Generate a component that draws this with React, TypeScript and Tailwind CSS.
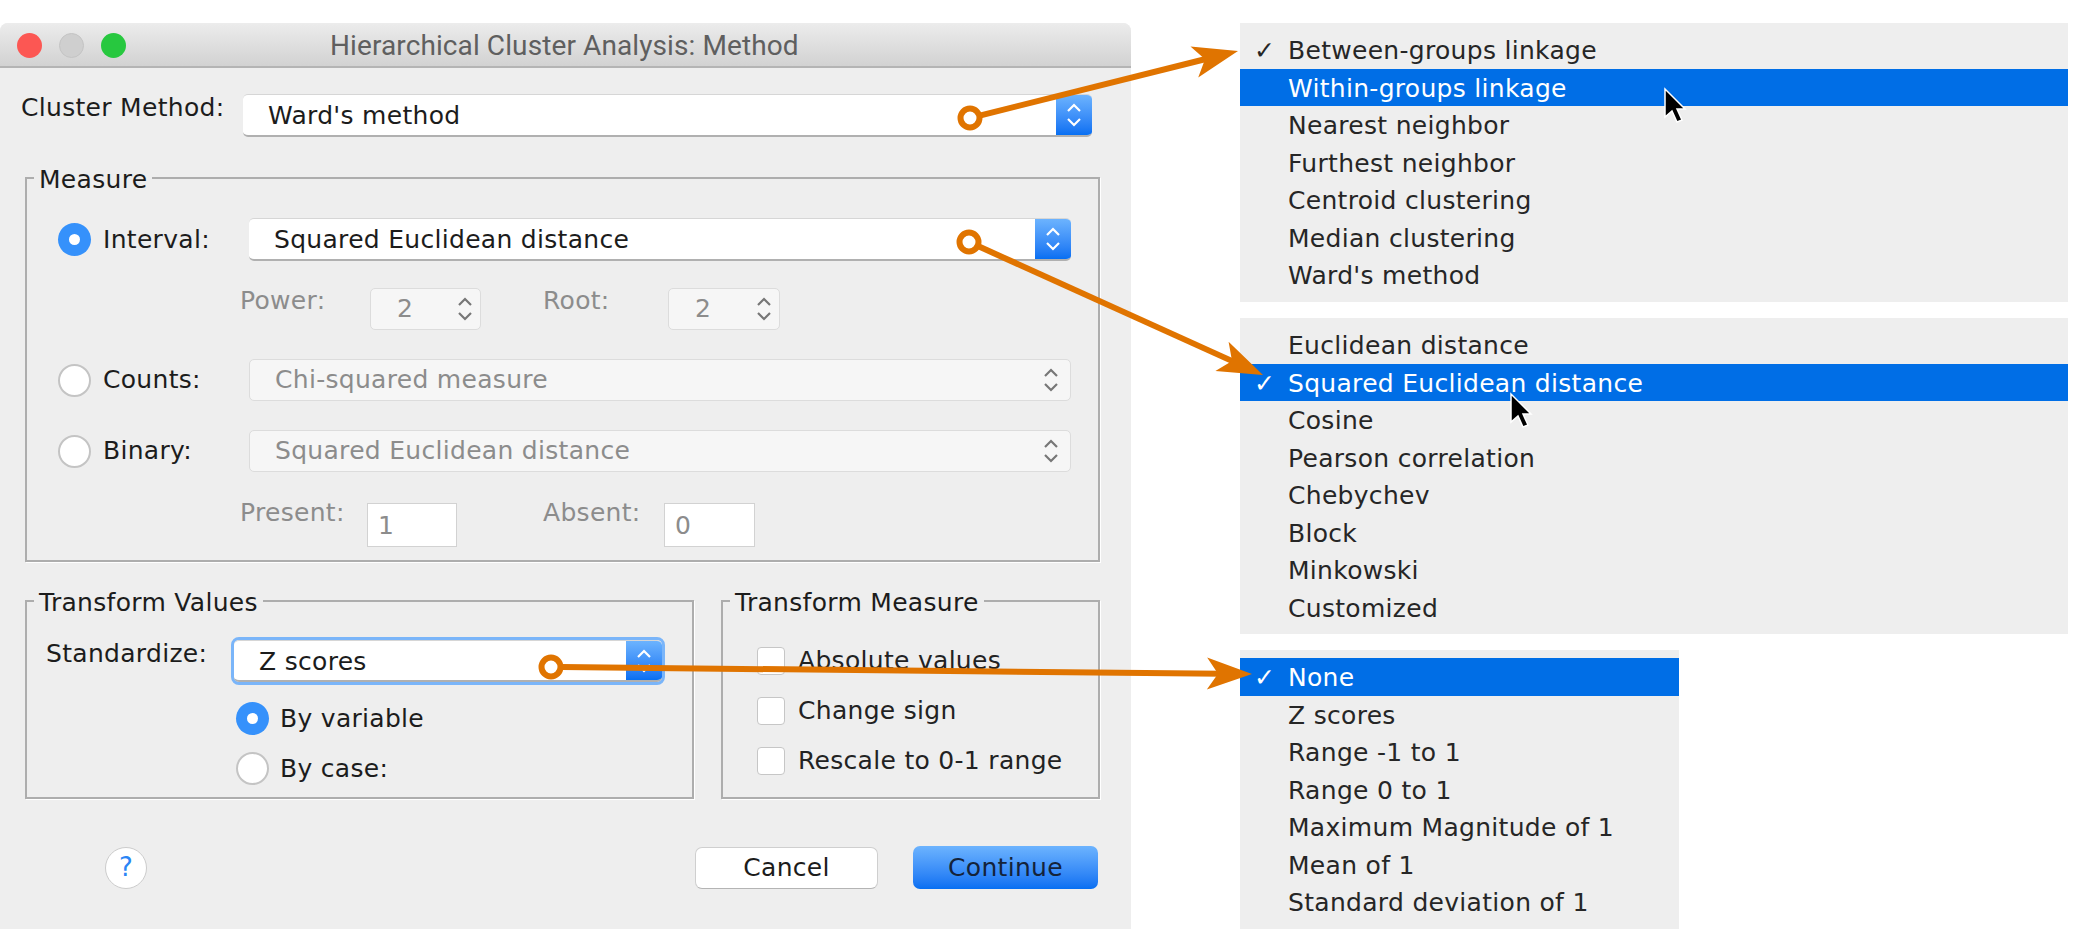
const menus = [
  {
    width: "w-[828px]",
    height: "h-[279px]",
    checked: "Between-groups linkage",
    active: "Within-groups linkage",
    items: ["Between-groups linkage", "Within-groups linkage", "Nearest neighbor", "Furthest neighbor", "Centroid clustering", "Median clustering", "Ward's method"],
  },
  {
    width: "w-[828px]",
    height: "h-[316px]",
    checked: "Squared Euclidean distance",
    active: "Squared Euclidean distance",
    items: ["Euclidean distance", "Squared Euclidean distance", "Cosine", "Pearson correlation", "Chebychev", "Block", "Minkowski", "Customized"],
  },
  {
    width: "w-[439px]",
    height: "h-[279px]",
    checked: "None",
    active: "None",
    items: ["None", "Z scores", "Range -1 to 1", "Range 0 to 1", "Maximum Magnitude of 1", "Mean of 1", "Standard deviation of 1"],
  },
];

function Chevrons({ color, width = 16 }: { color: string; width?: number }) {
  return (
    <svg width={width} height="26" viewBox="0 0 16 26" fill="none" stroke={color} strokeWidth="2.2">
      <polyline points="2,9 8,3 14,9" />
      <polyline points="2,17 8,23 14,17" />
    </svg>
  );
}

function Select({ label, className }: { label: string; className: string }) {
  return (
    <div className={`flex overflow-hidden rounded-[5px] border-t border-t-[#d6d6d6] border-b-2 border-b-[#b0b0b0] bg-white ${className}`}>
      <div className="flex-1 pl-[25px] leading-[41px] text-[#1c1c1c]">{label}</div>
      <div className="flex w-[36px] items-center justify-center bg-gradient-to-b from-[#6cb3fe] to-[#056ff2]">
        <Chevrons color="#ffffff" />
      </div>
    </div>
  );
}

function DisabledSelect({ label }: { label: string }) {
  return (
    <div className="flex h-[42px] w-[822px] items-center justify-between rounded-[5px] border border-[#dcdcdc] bg-[#f6f6f6] pl-[25px] pr-[11px] text-[#8c8c8c]">
      <span>{label}</span>
      <Chevrons color="#777777" />
    </div>
  );
}

function Spinner({ value, className }: { value: string; className: string }) {
  return (
    <div className={`flex h-[42px] items-center justify-between rounded-[5px] border border-[#dcdcdc] bg-[#f6f6f6] pl-[26px] pr-[7px] text-[#8c8c8c] ${className}`}>
      <span>{value}</span>
      <Chevrons color="#777777" />
    </div>
  );
}

function Radio({ on }: { on?: boolean }) {
  if (on) {
    return (
      <span className="flex h-[33px] w-[33px] shrink-0 items-center justify-center rounded-full bg-[#3591fb]">
        <span className="h-[11px] w-[11px] rounded-full bg-white" />
      </span>
    );
  }
  return <span className="h-[33px] w-[33px] shrink-0 rounded-full border-2 border-[#c4c4c4] bg-white" />;
}

function Check({ label }: { label: string }) {
  return (
    <div className="flex h-[28px] items-center gap-[13px] text-[#222222]">
      <span className="h-[28px] w-[28px] rounded-[4px] border border-[#c6c6c6] bg-white" />
      <span>{label}</span>
    </div>
  );
}

function Group({
  title,
  className,
  legendClass,
  children,
}: {
  title: string;
  className: string;
  legendClass: string;
  children: React.ReactNode;
}) {
  return (
    <fieldset className={`border-2 border-[#adadad] shadow-[1px_1px_0_#ffffff] ${className}`}>
      <legend className={`px-[5px] leading-[30px] text-[#1c1c1c] ${legendClass}`}>
        <span className="relative top-[2px]">{title}</span>
      </legend>
      {children}
    </fieldset>
  );
}

// orange callout: ring on the control, line, notched head on the menu
function Callout({ x1, y1, x2, y2 }: { x1: number; y1: number; x2: number; y2: number }) {
  const len = Math.hypot(x2 - x1, y2 - y1);
  const dx = (x2 - x1) / len;
  const dy = (y2 - y1) / len;
  const px = -dy;
  const py = dx;
  const head = [
    [x2, y2],
    [x2 - 45 * dx + 16 * px, y2 - 45 * dy + 16 * py],
    [x2 - 34 * dx, y2 - 34 * dy],
    [x2 - 45 * dx - 16 * px, y2 - 45 * dy - 16 * py],
  ]
    .map((p) => p.join(","))
    .join(" ");
  return (
    <g>
      <circle cx={x1} cy={y1} r="9.5" fill="#ffffff" stroke="#e07400" strokeWidth="6" />
      <line x1={x1 + 11 * dx} y1={y1 + 11 * dy} x2={x2 - 30 * dx} y2={y2 - 30 * dy} stroke="#e07400" strokeWidth="6" />
      <polygon points={head} fill="#e07400" />
    </g>
  );
}

function Cursor({ x, y }: { x: number; y: number }) {
  return (
    <polygon
      transform={`translate(${x} ${y})`}
      points="0,0 0,28 7,22 12,33 17,31 12,20 20,20"
      fill="#000000"
      stroke="#ffffff"
      strokeWidth="1.5"
    />
  );
}

export default function App() {
  return (
    <div className="relative flex h-[929px] w-[2095px] items-start overflow-hidden bg-white font-['DejaVu_Sans',sans-serif] text-[25px] tracking-[0.3px]">
      {/* Dialog */}
      <div className="mt-[23px] flex h-[906px] w-[1131px] shrink-0 flex-col rounded-t-[8px] bg-[#eeeeee]">
        <div className="flex h-[45px] shrink-0 items-center rounded-t-[8px] border-b-2 border-b-[#b4b4b4] bg-gradient-to-b from-[#ececec] to-[#d2d2d2] pt-[2px]">
          <div className="flex w-[330px] shrink-0 gap-[17px] pl-[17px]">
            <span className="h-[25px] w-[25px] rounded-full bg-[#fc5753]" />
            <span className="h-[25px] w-[25px] rounded-full border border-[#c4c4c4] bg-[#cfcfcf]" />
            <span className="h-[25px] w-[25px] rounded-full bg-[#27c83f]" />
          </div>
          <div className="font-['Roboto',sans-serif] text-[28px] tracking-[0.1px] text-[#5f5f5f]">Hierarchical Cluster Analysis: Method</div>
        </div>

        <div className="mt-[26px] flex">
          <div className="w-[243px] pl-[21px] leading-[28px] text-[#1c1c1c]">Cluster Method:</div>
          <Select label="Ward's method" className="h-[43px] w-[849px]" />
        </div>

        <Group title="Measure" className="ml-[25px] mt-[26px] w-[1075px] pb-[13px] pl-[31px]" legendClass="-ml-[24px]">
          <div className="mt-[25px] flex items-center">
            <Radio on />
            <div className="ml-[12px] w-[146px] text-[#1c1c1c]">Interval:</div>
            <Select label="Squared Euclidean distance" className="h-[43px] w-[822px]" />
          </div>

          <div className="mt-[27px] flex pl-[182px] text-[#8c8c8c]">
            <div className="w-[130px] leading-[26px]">Power:</div>
            <Spinner value="2" className="w-[111px]" />
            <div className="ml-[62px] w-[125px] leading-[26px]">Root:</div>
            <Spinner value="2" className="w-[112px]" />
          </div>

          <div className="mt-[29px] flex items-center">
            <Radio />
            <div className="ml-[12px] w-[146px] text-[#1c1c1c]">Counts:</div>
            <DisabledSelect label="Chi-squared measure" />
          </div>

          <div className="mt-[29px] flex items-center">
            <Radio />
            <div className="ml-[12px] w-[146px] text-[#1c1c1c]">Binary:</div>
            <DisabledSelect label="Squared Euclidean distance" />
          </div>

          <div className="mt-[31px] flex pl-[182px] text-[#8c8c8c]">
            <div className="-mt-[3px] w-[127px] leading-[26px]">Present:</div>
            <div className="h-[44px] w-[90px] border border-[#d2d2d2] bg-white pl-[10px] leading-[44px]">1</div>
            <div className="-mt-[3px] ml-[86px] w-[121px] leading-[26px]">Absent:</div>
            <div className="h-[44px] w-[91px] border border-[#d2d2d2] bg-white pl-[10px] leading-[44px]">0</div>
          </div>
        </Group>

        <div className="mt-[24px] flex">
          <Group title="Transform Values" className="ml-[25px] w-[669px] pb-[12px] pl-[19px]" legendClass="-ml-[12px]">
            <div className="mt-[21px] flex">
              <div className="mt-[4px] w-[185px] leading-[26px] text-[#1c1c1c]">Standardize:</div>
              <div className="rounded-[8px] border-[3px] border-[#7ab5f9]">
                <Select label="Z scores" className="h-[42px] w-[428px]" />
              </div>
            </div>
            <div className="mt-[17px] flex items-center gap-[11px] pl-[190px] leading-[33px] text-[#1c1c1c]">
              <Radio on />
              <span>By variable</span>
            </div>
            <div className="mt-[17px] flex items-center gap-[11px] pl-[190px] leading-[33px] text-[#1c1c1c]">
              <Radio />
              <span>By case:</span>
            </div>
          </Group>

          <Group title="Transform Measure" className="ml-[27px] w-[379px] pl-[34px]" legendClass="-ml-[27px]">
            <div className="mt-[31px] flex flex-col gap-[22px]">
              <Check label="Absolute values" />
              <Check label="Change sign" />
              <Check label="Rescale to 0-1 range" />
            </div>
          </Group>
        </div>

        <div className="mt-[47px] flex items-center">
          <div className="ml-[105px] flex h-[42px] w-[42px] items-center justify-center rounded-full border border-[#cccccc] bg-white text-[26px] text-[#2a85f5]">?</div>
          <button className="ml-[548px] h-[42px] w-[183px] rounded-[7px] border border-[#cfcfcf] border-b-[#b4b4b4] bg-white text-[#1c1c1c]">Cancel</button>
          <button className="ml-[35px] h-[43px] w-[185px] rounded-[7px] bg-gradient-to-b from-[#6cb3fe] to-[#056ff2] text-[#14233a]">Continue</button>
        </div>
      </div>

      {/* Popup lists */}
      <div className="ml-[109px] mt-[23px] flex flex-col gap-[16px]">
        {menus.map((menu) => (
          <div key={menu.items[0]} className={`bg-[#eeeeee] pt-[8px] text-[#262626] ${menu.width} ${menu.height}`}>
            {menu.items.map((item) => (
              <div
                key={item}
                className={`flex h-[37.5px] items-center pl-[14px] pt-[2px] ${item === menu.active ? "bg-[#006ee6] text-white" : ""}`}
              >
                <span className="w-[34px] shrink-0">{item === menu.checked ? "✓" : ""}</span>
                <span>{item}</span>
              </div>
            ))}
          </div>
        ))}
      </div>

      {/* Annotations over the screenshot */}
      <svg className="pointer-events-none absolute inset-0" width="2095" height="929">
        <Callout x1={970} y1={118} x2={1238} y2={51} />
        <Callout x1={969} y1={242} x2={1263} y2={375} />
        <Callout x1={551} y1={667} x2={1252} y2={674} />
        <Cursor x={1665} y={89} />
        <Cursor x={1511} y={394} />
      </svg>
    </div>
  );
}
